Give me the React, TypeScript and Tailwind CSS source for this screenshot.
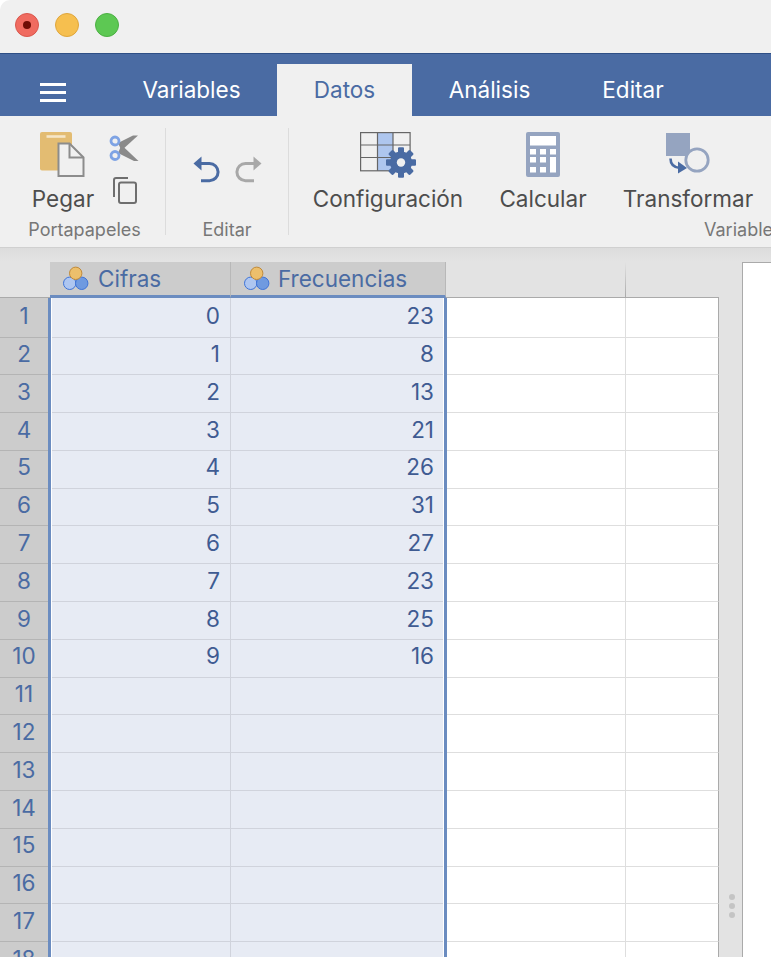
import React from "react";

const font = { fontFamily: "Inter, 'Liberation Sans', sans-serif" };
const cifras = ["0", "1", "2", "3", "4", "5", "6", "7", "8", "9"];
const frecuencias = ["23", "8", "13", "21", "26", "31", "27", "23", "25", "16"];
const rows = Array.from({ length: 18 }, (_, i) => i);

function VarIcon() {
  return (
    <svg width="28" height="28" viewBox="0 0 28 28" className="shrink-0">
      <circle cx="7.7" cy="18.3" r="6.2" fill="#aec6f0" stroke="#3f74d8" strokeWidth="1" />
      <circle cx="19.7" cy="18.3" r="6.2" fill="#6f9ae0" stroke="#3f74d8" strokeWidth="1" />
      <circle cx="13.7" cy="8.3" r="6.2" fill="#ecbf6c" stroke="#c08a3a" strokeWidth="1" />
    </svg>
  );
}

function PasteIcon() {
  return (
    <svg width="46" height="46" viewBox="0 0 46 46">
      <rect x="0" y="0" width="32" height="38.5" rx="2" fill="#e3bc72" />
      <rect x="6.5" y="3.2" width="19" height="2.6" fill="#f6e6c8" />
      <path d="M18.5 11.5H29.5L43.5 25.5V44H18.5Z" fill="#f0f0f0" stroke="#8c8c8c" strokeWidth="2" />
      <path d="M29.5 11.5V25.5H43.5" fill="none" stroke="#8c8c8c" strokeWidth="2" />
    </svg>
  );
}

function ScissorsIcon() {
  return (
    <svg width="30" height="27" viewBox="0 0 30 27">
      <path d="M9 8L24 0.5H29L12.5 15.5Z" fill="#8a8a8a" />
      <path d="M9 18L25 26H29.5L12.5 10Z" fill="#8a8a8a" />
      <circle cx="6" cy="6" r="4" fill="#f0f0f0" stroke="#7ea3e4" strokeWidth="2.8" />
      <circle cx="6" cy="20.5" r="4" fill="#f0f0f0" stroke="#7ea3e4" strokeWidth="2.8" />
    </svg>
  );
}

function CopyIcon() {
  return (
    <svg width="24" height="27" viewBox="0 0 24 27">
      <path d="M1 20V3a2 2 0 0 1 2-2H15" fill="none" stroke="#6e6e6e" strokeWidth="2" />
      <rect x="6" y="5.5" width="17" height="20.5" rx="2" fill="#f0f0f0" stroke="#6e6e6e" strokeWidth="2" />
    </svg>
  );
}

function UndoIcon({ color, flip }: { color: string; flip?: boolean }) {
  return (
    <svg width="27" height="27" viewBox="0 0 27 27" className={flip ? "-scale-x-100" : ""}>
      <path d="M0.5 7.5L8.5 0.5V14.5Z" fill={color} />
      <path d="M7 7.5H16.5a8.2 8.2 0 0 1 0 17.2H8" fill="none" stroke={color} strokeWidth="3" />
    </svg>
  );
}

function ConfigIcon() {
  const teeth = [0, 45, 90, 135, 180, 225, 270, 315];
  return (
    <svg width="58" height="46" viewBox="0 0 58 46">
      <rect x="17.5" y="0.5" width="15.5" height="38.5" fill="#aec6ee" />
      <g stroke="#666666" strokeWidth="1.2" fill="none">
        <rect x="0.6" y="0.6" width="49.5" height="38.2" />
        <path d="M17.5 0.6V38.8M33 0.6V38.8M0.6 13H50M0.6 25.5H50" />
      </g>
      <g transform="translate(41 30.5)" fill="#4a6ba3">
        {teeth.map((a) => (
          <rect key={a} x="-3" y="-15" width="6" height="30" rx="1" transform={`rotate(${a})`} />
        ))}
        <circle r="11" />
        <circle r="4.2" fill="#f0f0f0" />
      </g>
    </svg>
  );
}

function CalcIcon() {
  const keys = [
    [4, 17, 6, 5.5],
    [14, 17, 6, 5.5],
    [24, 17, 6, 5.5],
    [4, 25, 6, 5.5],
    [14, 25, 6, 5.5],
    [4, 35, 6, 5.5],
    [14, 35, 6, 5.5],
  ];
  return (
    <svg width="34" height="46" viewBox="0 0 34 46">
      <rect width="34" height="45" rx="2" fill="#95a4c0" />
      <rect x="4" y="4" width="26" height="9.5" fill="#ffffff" />
      {keys.map(([x, y, w, h]) => (
        <rect key={`${x}-${y}`} x={x} y={y} width={w} height={h} fill="#ffffff" />
      ))}
      <rect x="24" y="25" width="6" height="15.5" fill="#ffffff" />
    </svg>
  );
}

function TransformIcon() {
  return (
    <svg width="46" height="46" viewBox="0 0 46 46">
      <rect x="0" y="1" width="24" height="23" fill="#95a4c0" />
      <circle cx="31" cy="28" r="11.2" fill="#f0f0f0" stroke="#95a4c0" strokeWidth="2.8" />
      <path d="M4.5 26.5C4.5 33 8 35.5 14 36" fill="none" stroke="#4a6ba3" strokeWidth="2.6" />
      <path d="M12 29.5L21 36L12 41.5Z" fill="#4a6ba3" />
    </svg>
  );
}

function BigButton({ icon, label, className }: { icon: React.ReactNode; label: string; className: string }) {
  return (
    <div className={`flex flex-col items-center ${className}`}>
      <div className="h-[54px] flex items-start justify-center">{icon}</div>
      <div className="h-[26px] text-[22.5px] leading-[26px] text-[#4d4d4d] whitespace-nowrap">{label}</div>
    </div>
  );
}

function Tab({ label, className, active }: { label: string; className: string; active?: boolean }) {
  return (
    <div
      className={`h-[52px] flex items-center justify-center text-[22.5px] ${className} ${
        active ? "bg-[#f0f0f0] text-[#4a6ba3]" : "text-white"
      }`}
    >
      {label}
    </div>
  );
}

function Circle({ className, children }: { className: string; children?: React.ReactNode }) {
  return (
    <div className={`w-6 h-6 rounded-full border flex items-center justify-center ${className}`}>{children}</div>
  );
}

export default function App() {
  return (
    <div className="w-[771px] h-[957px] overflow-hidden flex flex-col bg-white" style={font}>
      <div className="h-[54px] shrink-0 bg-[#f0f0f0] rounded-tl-[10px] border-b border-[#2f4f86] flex items-start gap-4 pl-[15px] pt-[13px]">
        <Circle className="bg-[#f06b60] border-[#d9574d]">
          <div className="w-2 h-2 rounded-full bg-[#6f0d05]" />
        </Circle>
        <Circle className="bg-[#f6bf4f] border-[#dfa63c]" />
        <Circle className="bg-[#5dc853] border-[#4cb043]" />
      </div>

      <div className="h-[62px] shrink-0 bg-[#4a6ba3] flex items-end">
        <div className="w-[106px] h-[52px] flex flex-col gap-[5.5px] pl-10 pt-[19px]">
          <div className="w-[26px] h-[2.5px] bg-white" />
          <div className="w-[26px] h-[2.5px] bg-white" />
          <div className="w-[26px] h-[2.5px] bg-white" />
        </div>
        <Tab label="Variables" className="w-[171px]" />
        <Tab label="Datos" active className="w-[135px]" />
        <Tab label="Análisis" className="w-[155px]" />
        <Tab label="Editar" className="w-[132px]" />
      </div>

      <div className="h-[132px] shrink-0 bg-[#f0f0f0] border-b border-[#d0d0d0] flex items-start pt-3">
        <div className="w-[166px] h-[107px] shrink-0 border-r border-[#dcdcdc] flex flex-col pt-1 relative">
          <div className="flex items-start">
            <BigButton icon={<PasteIcon />} label="Pegar" className="w-[109px] pl-[17px]" />
            <div className="flex flex-col items-start pt-[3px]">
              <ScissorsIcon />
              <div className="h-[15px]" />
              <div className="pl-1"><CopyIcon /></div>
            </div>
          </div>
          <div className="absolute left-0 w-[169px] top-[92px] text-center text-[18px] leading-5 text-[#777777]">
            Portapapeles
          </div>
        </div>

        <div className="w-[123px] h-[107px] shrink-0 border-r border-[#dcdcdc] relative pt-[28px] pl-[27px] flex gap-[15px]">
          <UndoIcon color="#4a6ba3" />
          <UndoIcon color="#a8a8a8" flip />
          <div className="absolute left-0 w-[122px] top-[92px] text-center text-[18px] leading-5 text-[#777777]">
            Editar
          </div>
        </div>

        <div className="flex-1 h-[107px] relative pt-1 pl-[24px] flex items-start gap-[37px]">
          <BigButton icon={<div className="pl-[2px]"><ConfigIcon /></div>} label="Configuración" className="w-[150px]" />
          <BigButton icon={<CalcIcon />} label="Calcular" className="w-[86px]" />
          <BigButton icon={<div className="pl-[2px]"><TransformIcon /></div>} label="Transformar" className="w-[130px]" />
          <div className="absolute left-[415px] top-[92px] text-[18px] leading-5 text-[#777777] whitespace-nowrap">
            Variables
          </div>
        </div>
      </div>

      <div className="flex-1 min-h-0 flex items-start bg-[#e3e3e3] bg-[linear-gradient(to_bottom,#dcdcdc,#e3e3e3_14px)] pt-[14px]">
        <div className="w-[719px] shrink-0">
          <div className="h-[36px] flex items-stretch">
            <div className="w-[50px] shrink-0 border-b border-[#aaaaaa]" />
            <div className="w-[181px] shrink-0 bg-[#cccccc] border-b-[3px] border-[#6b8cc0] border-r border-r-[#b8b8b8] flex items-center gap-[8px] pl-[12px] text-[22.5px] text-[#4a6ba3]">
              <VarIcon />
              Cifras
            </div>
            <div className="w-[215px] shrink-0 bg-[#cccccc] border-b-[3px] border-[#6b8cc0] border-r border-r-[#b8b8b8] flex items-center gap-[7px] pl-[12px] text-[22.5px] text-[#4a6ba3]">
              <VarIcon />
              Frecuencias
            </div>
            <div className="w-[179px] shrink-0 border-b border-[#aaaaaa]" />
            <div className="w-[1px] shrink-0 bg-[linear-gradient(to_bottom,#e3e3e3,#a8a8a8)]" />
            <div className="flex-1 border-b border-[#aaaaaa]" />
          </div>
          {rows.map((i) => (
            <div key={i} className={`flex ${i === 0 ? "h-[39.5px]" : "h-[37.8px]"}`}>
              <div className={`w-[48px] shrink-0 bg-[#cccccc] border-b border-[#b4b4b4] flex items-center justify-center text-[22.5px] text-[#4a6ba3] ${i === 0 ? "pb-[3px]" : "pb-[4px]"}`}>
                {i + 1}
              </div>
              <div className="w-[3px] shrink-0 bg-[#6b8cc0]" />
              <div className="w-[1px] shrink-0 bg-white" />
              <div className={`w-[179px] shrink-0 bg-[#e7ebf4] border-b border-r border-[#d0d3dc] flex items-center justify-end pr-[10px] text-[22.5px] text-[#3f5b92] ${i === 0 ? "pb-[3px]" : "pb-[4px]"}`}>
                {cifras[i]}
              </div>
              <div className={`w-[212px] shrink-0 bg-[#e7ebf4] border-b border-[#d0d3dc] flex items-center justify-end pr-[9px] text-[22.5px] text-[#3f5b92] ${i === 0 ? "pb-[3px]" : "pb-[4px]"}`}>
                {frecuencias[i]}
              </div>
              <div className="w-[1px] shrink-0 bg-white" />
              <div className="w-[3px] shrink-0 bg-[#6b8cc0]" />
              <div className="w-[179px] shrink-0 bg-white border-b border-r border-[#dedede]" />
              <div className="flex-1 bg-white border-b border-r border-b-[#dedede] border-r-[#aaaaaa]" />
            </div>
          ))}
        </div>
        <div className="w-[23px] shrink-0 flex flex-col items-center gap-[3px] pl-[2px] pt-[632px]">
          <div className="w-[6px] h-[6px] rounded-full bg-[#c4c4c4]" />
          <div className="w-[6px] h-[6px] rounded-full bg-[#c4c4c4]" />
          <div className="w-[6px] h-[6px] rounded-full bg-[#c4c4c4]" />
        </div>
        <div className="flex-1 h-[800px] bg-white border-l border-t border-[#aaaaaa]" />
      </div>
    </div>
  );
}
